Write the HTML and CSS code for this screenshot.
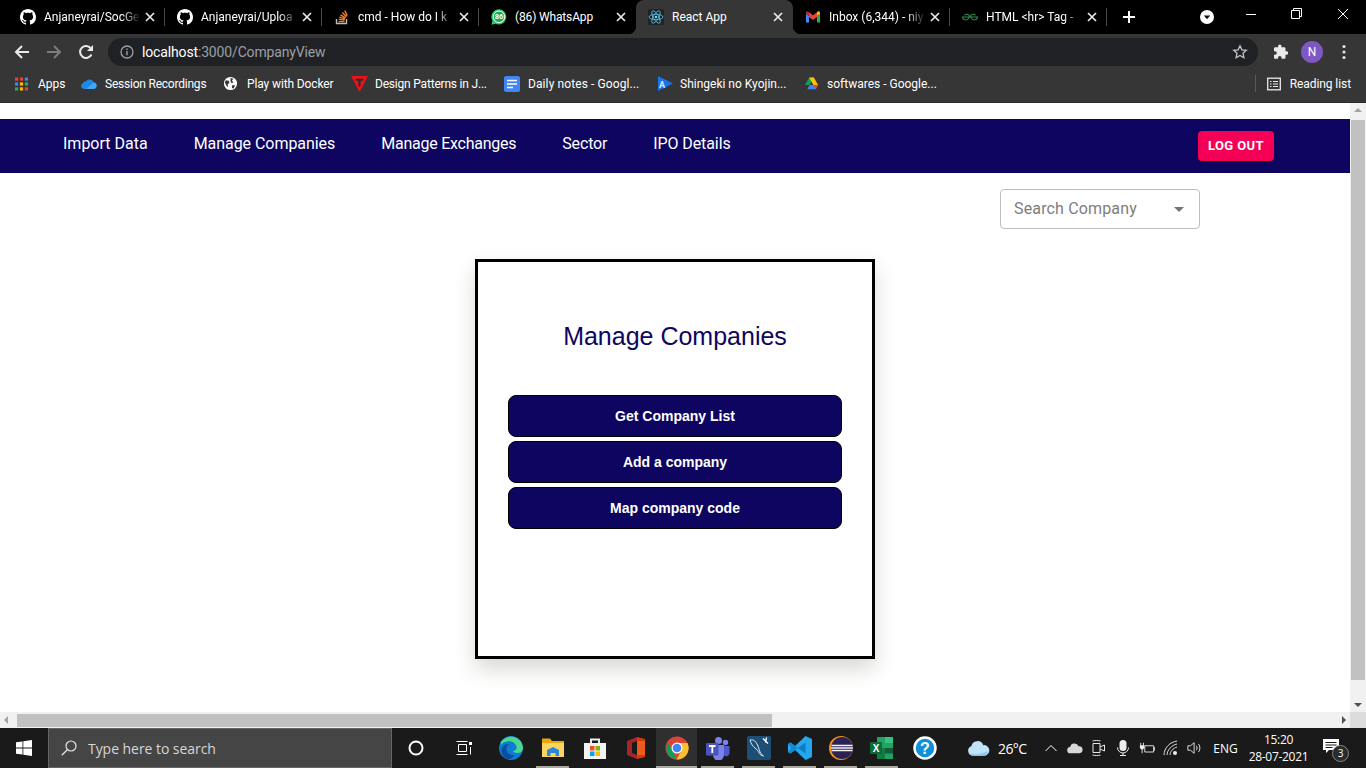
FILE: index.html
```html
<!DOCTYPE html>
<html lang="en">
<head>
    <meta charset="UTF-8">
    <meta name="viewport" content="width=device-width, initial-scale=1.0">
    <title>React App</title>
    <link rel="stylesheet" href="styles.css">
</head>
<body>
    <svg class="defs" width="0" height="0">
        <symbol id="i-github" viewBox="0 0 16 16"><path fill="#fff" d="M8 0C3.58 0 0 3.58 0 8c0 3.54 2.29 6.53 5.47 7.59.4.07.55-.17.55-.38 0-.19-.01-.82-.01-1.49-2.01.37-2.53-.49-2.69-.94-.09-.23-.48-.94-.82-1.13-.28-.15-.68-.52-.01-.53.63-.01 1.08.58 1.23.82.72 1.21 1.87.87 2.33.66.07-.52.28-.87.51-1.07-1.78-.2-3.64-.89-3.64-3.95 0-.87.31-1.59.82-2.15-.08-.2-.36-1.02.08-2.12 0 0 .67-.21 2.2.82.64-.18 1.32-.27 2-.27.68 0 1.36.09 2 .27 1.53-1.04 2.2-.82 2.2-.82.44 1.1.16 1.92.08 2.12.51.56.82 1.27.82 2.15 0 3.07-1.87 3.75-3.65 3.95.29.25.54.73.54 1.48 0 1.07-.01 1.93-.01 2.2 0 .21.15.46.55.38A8.013 8.013 0 0016 8c0-4.42-3.58-8-8-8z"/></symbol>
        <symbol id="i-close" viewBox="0 0 10 10"><path stroke="#e8eaed" stroke-width="1.7" d="M1 1l8 8M9 1l-8 8"/></symbol>
    </svg>

    <div class="tabstrip">
        <div class="tab">
            <svg class="favicon"><use href="#i-github"/></svg>
            <span class="tab-title">Anjaneyrai/SocGe</span>
            <svg class="tab-close"><use href="#i-close"/></svg>
        </div>
        <div class="tab">
            <svg class="favicon"><use href="#i-github"/></svg>
            <span class="tab-title">Anjaneyrai/Uploa</span>
            <svg class="tab-close"><use href="#i-close"/></svg>
        </div>
        <div class="tab">
            <svg class="favicon" viewBox="0 0 16 16"><path fill="none" stroke="#bcbbbb" stroke-width="1.4" d="M2.5 10v4.5h10V10"/><path fill="none" stroke="#f48024" stroke-width="1.4" d="M4.5 12.6h6M4.7 10.4l5.9.6M5.3 8.2l5.7 1.6M6.5 5.9l5.1 3M8.4 3.6l4.1 4.2M10.8 1.6l2.4 5.2"/></svg>
            <span class="tab-title">cmd - How do I k</span>
            <svg class="tab-close"><use href="#i-close"/></svg>
        </div>
        <div class="tab">
            <svg class="favicon" viewBox="0 0 16 16"><path fill="#25d366" d="M8 .2a7.6 7.6 0 0 0-6.500 11.500L.4 15.800l4.100-1.100A7.600 7.600 0 1 0 8 .2z"/><circle cx="8" cy="7.800" r="5.700" fill="#1aa557" stroke="#fff" stroke-width="1"/><text x="8" y="10.300" class="wa-count">86</text></svg>
            <span class="tab-title">(86) WhatsApp</span>
            <svg class="tab-close"><use href="#i-close"/></svg>
        </div>
        <div class="tab active">
            <svg class="favicon" viewBox="0 0 16 16"><rect width="16" height="16" rx="2" fill="#20232a"/><g fill="none" stroke="#61dafb" stroke-width=".7"><ellipse cx="8" cy="8" rx="7" ry="2.7"/><ellipse cx="8" cy="8" rx="7" ry="2.7" transform="rotate(60 8 8)"/><ellipse cx="8" cy="8" rx="7" ry="2.7" transform="rotate(120 8 8)"/></g><circle cx="8" cy="8" r="1.3" fill="#61dafb"/></svg>
            <span class="tab-title">React App</span>
            <svg class="tab-close"><use href="#i-close"/></svg>
        </div>
        <div class="tab">
            <svg class="favicon" viewBox="0 0 16 16"><path fill="#4285f4" d="M1 13.5h3V7L1 4.5z"/><path fill="#34a853" d="M12 13.5h3v-9L12 7z"/><path fill="#ea4335" d="M4 8V3.2L8 6.300l4-3.100V8L8 11z"/><path fill="#c5221f" d="M1 4.700V3.800C1 2.500 2.600 1.900 3.500 2.700L4 3.200V7z"/><path fill="#fbbc04" d="M15 4.700V3.800c0-1.300-1.600-1.900-2.500-1.100l-.5.500V7z"/></svg>
            <span class="tab-title">Inbox (6,344) - niy</span>
            <svg class="tab-close"><use href="#i-close"/></svg>
        </div>
        <div class="tab">
            <svg class="favicon" viewBox="0 0 16 16"><path fill="none" stroke="#2f8d46" stroke-width="1.100" d="M8 8h7.500a3.300 3.300 0 0 1-6 1.500C8.500 8 8 6 10 5.500a3 3 0 0 1 3.500.9M8 8H.5a3.300 3.300 0 0 0 6 1.500C7.500 8 8 6 6 5.500a3 3 0 0 0-3.500.9"/></svg>
            <span class="tab-title">HTML &lt;hr&gt; Tag -</span>
            <svg class="tab-close"><use href="#i-close"/></svg>
        </div>
        <svg class="new-tab" viewBox="0 0 12 12"><path stroke="#fff" stroke-width="2" d="M6 0v12M0 6h12"/></svg>
        <svg class="profile-down" viewBox="0 0 14 14"><circle cx="7" cy="7" r="7" fill="#fff"/><path fill="#111" d="M3.800 5.500h6.400L7 9.300z"/></svg>
        <div class="window-btns">
            <svg viewBox="0 0 46 30"><path stroke="#fff" d="M18 14.500h10"/></svg>
            <svg viewBox="0 0 46 30"><path fill="none" stroke="#fff" d="M19.500 10.500v-2h8v8h-2M17.500 10.500h8v8h-8z"/></svg>
            <svg viewBox="0 0 46 30"><path stroke="#fff" d="M18 9l10 10M28 9L18 19"/></svg>
        </div>
    </div>

    <div class="toolbar">
        <svg class="tool-icon" viewBox="0 0 16 16"><path fill="none" stroke="#e8eaed" stroke-width="2" d="M15 8H2M8 2L2 8l6 6"/></svg>
        <svg class="tool-icon" viewBox="0 0 16 16"><path fill="none" stroke="#7a7c7f" stroke-width="2" d="M1 8h13M8 2l6 6-6 6"/></svg>
        <svg class="tool-icon" viewBox="0 0 16 16"><path fill="none" stroke="#e8eaed" stroke-width="2" d="M13.500 10.500A6 6 0 1 1 13 4.500"/><path fill="#e8eaed" d="M15 1v6H9z"/></svg>
        <div class="omnibox">
            <svg class="info-icon" viewBox="0 0 14 14"><circle cx="7" cy="7" r="6" fill="none" stroke="#9aa0a6" stroke-width="1.300"/><path stroke="#9aa0a6" stroke-width="1.400" d="M7 6v4.200M7 3.500v1.400"/></svg>
            <span class="url"><span class="host">localhost</span>:3000/CompanyView</span>
            <svg class="star-icon" viewBox="0 0 16 16"><path fill="none" stroke="#c4c7c5" stroke-width="1.300" d="M8 1.800l1.900 4 4.400.5-3.300 3 .9 4.400L8 11.500l-3.900 2.200.9-4.400-3.300-3 4.400-.5z"/></svg>
        </div>
        <svg class="puzzle" viewBox="0 0 16 16"><path fill="#e8eaed" d="M14.500 7.300h-1V4.600c0-.8-.6-1.400-1.400-1.400H9.500v-1a1.700 1.700 0 0 0-3.400 0v1H3.400C2.600 3.200 2 3.800 2 4.600v2.600h1a1.800 1.800 0 0 1 0 3.600H2v2.600c0 .8.600 1.400 1.400 1.400H6v-1a1.800 1.800 0 0 1 3.600 0v1h2.500c.8 0 1.400-.6 1.400-1.400v-2.700h1a1.700 1.700 0 0 0 0-3.400z"/></svg>
        <span class="avatar">N</span>
        <svg class="dots" viewBox="0 0 4 16"><circle cx="2" cy="2.500" r="1.500" fill="#e8eaed"/><circle cx="2" cy="8" r="1.500" fill="#e8eaed"/><circle cx="2" cy="13.500" r="1.500" fill="#e8eaed"/></svg>
    </div>

    <div class="bookmarks">
        <div class="bm">
            <svg viewBox="0 0 14 14"><rect width="3.400" height="3.400" fill="#ea4335"/><rect x="5.300" width="3.400" height="3.400" fill="#ea4335"/><rect x="10.600" width="3.400" height="3.400" fill="#4285f4"/><rect y="5.300" width="3.400" height="3.400" fill="#4285f4"/><rect x="5.300" y="5.300" width="3.400" height="3.400" fill="#fbbc04"/><rect x="10.600" y="5.300" width="3.400" height="3.400" fill="#34a853"/><rect y="10.600" width="3.400" height="3.400" fill="#34a853"/><rect x="5.300" y="10.600" width="3.400" height="3.400" fill="#fbbc04"/><rect x="10.600" y="10.600" width="3.400" height="3.400" fill="#ea4335"/></svg>
            <span>Apps</span>
        </div>
        <div class="bm">
            <svg viewBox="0 0 16 11"><path fill="#1e88e5" d="M3 11A3 3 0 0 1 1.800 5.300 3.500 3.500 0 0 1 5 3.300 4.300 4.300 0 0 1 12.700 4.500 3.300 3.300 0 0 1 13 11z"/><path fill="#42a5f5" d="M5 11l7.500-6.500A3.300 3.300 0 0 1 13 11z"/></svg>
            <span>Session Recordings</span>
        </div>
        <div class="bm">
            <svg viewBox="0 0 16 16"><circle cx="8" cy="8" r="7" fill="#fff"/><path fill="#363636" d="M3 4.500l3 .5 1 2-2 2 .5 3L3.500 10 2 7zM8 2l3 1-1.500 2L11 6.500 9.500 8 8 5.500zM10 9.500l3 .5-2 3.500-1.500-1z"/></svg>
            <span>Play with Docker</span>
        </div>
        <div class="bm">
            <svg viewBox="0 0 16 16"><path fill="#ee1119" d="M0 1h16L8 16z"/><path fill="#2b2b2b" d="M4.500 3.500h7v1.800H9v4.500L8 11.500 7 9.800V5.300H4.500z"/></svg>
            <span>Design Patterns in J...</span>
        </div>
        <div class="bm">
            <svg viewBox="0 0 16 16"><rect width="16" height="16" rx="2" fill="#4285f4"/><path stroke="#fff" stroke-width="1.600" d="M3 4.500h10M3 8h10M3 11.500h6"/></svg>
            <span>Daily notes - Googl...</span>
        </div>
        <div class="bm">
            <svg viewBox="0 0 15 15"><path fill="#1a73e8" d="M0 0l15 7.500L0 15z"/><text x="1" y="11.500" class="prime-a">A</text></svg>
            <span>Shingeki no Kyojin...</span>
        </div>
        <div class="bm">
            <svg viewBox="0 0 16 16"><path fill="#0f9d58" d="M5.500 1.500h5L6 9.700H1z"/><path fill="#ffc107" d="M10.500 1.500L15 9.700h-5L5.500 1.500z"/><path fill="#4285f4" d="M15 9.700l-2.500 4.500h-9L6 9.700z"/><path fill="#ea4335" d="M15 9.700l-2.500 4.500-2.500-4.500z"/></svg>
            <span>softwares - Google...</span>
        </div>
        <div class="reading">
            <svg viewBox="0 0 14 14"><rect x=".7" y="1.200" width="12.600" height="11.600" fill="none" stroke="#e8eaed" stroke-width="1.300"/><path stroke="#e8eaed" stroke-width="1.200" d="M3 4.500h1.500M6 4.500h5M3 7h1.500M6 7h5M3 9.500h1.500M6 9.500h5"/></svg>
            <span>Reading list</span>
        </div>
    </div>

    <div class="viewport">
        <div class="page-col">
            <div class="page">
                <nav class="navbar">
                    <a class="nav-link">Import Data</a>
                    <a class="nav-link">Manage Companies</a>
                    <a class="nav-link">Manage Exchanges</a>
                    <a class="nav-link">Sector</a>
                    <a class="nav-link">IPO Details</a>
                    <button class="logout">LOG OUT</button>
                </nav>
                <div class="search-row">
                    <div class="search-select">
                        <span>Search Company</span>
                        <i class="caret"></i>
                    </div>
                </div>
                <div class="card">
                    <h2>Manage Companies</h2>
                    <div class="card-actions">
                        <button class="action-btn">Get Company List</button>
                        <button class="action-btn">Add a company</button>
                        <button class="action-btn">Map company code</button>
                    </div>
                </div>
            </div>
            <div class="hscroll">
                <i class="arrow-left"></i>
                <div class="hthumb"></div>
                <i class="arrow-right"></i>
            </div>
        </div>
        <div class="vscroll">
            <i class="arrow-up"></i>
            <div class="vthumb"></div>
            <i class="arrow-down"></i>
            <div class="corner"></div>
        </div>
    </div>

    <div class="taskbar">
        <div class="start">
            <svg viewBox="0 0 16 16"><path fill="#fff" d="M0 2.300l6.500-.9v6.200H0zM7.300 1.300L16 0v7.600H7.300zM0 8.400h6.500v6.200L0 13.700zM7.300 8.400H16V16l-8.700-1.300z"/></svg>
        </div>
        <div class="task-search">
            <svg viewBox="0 0 16 16"><circle cx="10" cy="6" r="5" fill="none" stroke="#e6e6e6" stroke-width="1.200"/><path stroke="#e6e6e6" stroke-width="1.300" d="M6.300 9.700L.8 15.200"/></svg>
            <span>Type here to search</span>
        </div>
        <div class="task-btn"><svg class="cortana" viewBox="0 0 16 16"><circle cx="8" cy="8" r="6.500" fill="none" stroke="#fff" stroke-width="2"/></svg></div>
        <div class="task-btn"><svg class="taskview" viewBox="0 0 16 16"><path fill="none" stroke="#fff" d="M.5 1.500h11M2.500 4.500h8v7h-8zM.5 14.500h11M14.500 7v7.500"/><rect x="13" y="2" width="3" height="3" fill="#fff"/></svg></div>
        <div class="pinned">
            <div class="app">
                <svg viewBox="0 0 24 24"><circle cx="12" cy="12" r="12" fill="#0c7cd5"/><path fill="#4bd88a" d="M2 6a12 12 0 0 1 22 6c0 3-2.500 5-5.500 5-2.500 0-4-1-4.500-2 3-.5 4-2.500 3.500-4.500C16.500 7 13 5 9.500 5.300 6 5.600 3.500 7 2 9z"/><path fill="#0a4f9e" d="M9 23c-4-1-7-5-6.500-9.500C3 9.500 7 7.500 10.500 8c-2.500 1-3.500 3.500-3 6 .5 3 3.500 5.500 8 5-1.500 2.500-4 4.500-6.500 4z"/></svg>
            </div>
            <div class="app open">
                <svg viewBox="0 0 24 24"><path fill="#e8a80c" d="M1 2.500h8l2 2.500h12v16H1z"/><path fill="#fcd462" d="M1 7h22v14H1z"/><path fill="#2b88d8" d="M6 20v-6l6-3 6 3v6h-3.500v-3h-5v3z"/></svg>
            </div>
            <div class="app">
                <svg viewBox="0 0 24 24"><path fill="none" stroke="#eee" stroke-width="2" d="M8 7V3.500h8V7"/><path fill="#f3f3f3" d="M1 7h22v16H1z"/><rect x="7" y="10" width="4.500" height="4.500" fill="#f25022"/><rect x="12.500" y="10" width="4.500" height="4.500" fill="#7fba00"/><rect x="7" y="15.500" width="4.500" height="4.500" fill="#00a4ef"/><rect x="12.500" y="15.500" width="4.500" height="4.500" fill="#ffb900"/></svg>
            </div>
            <div class="app">
                <svg viewBox="0 0 24 24"><path fill="#d83b01" d="M13 1l8 2v18l-8 2z"/><path fill="#a4262c" d="M3 5l10-4v4L8 7v10l5 2v4L3 19z"/><path fill="#eb5a1e" d="M13 5h8v14h-8z"/></svg>
            </div>
            <div class="app running">
                <svg viewBox="0 0 24 24"><circle cx="12" cy="12" r="11.500" fill="#db4437"/><path fill="#0f9d58" d="M2.800 6.500L7.500 14.500 11.500 23.500A11.500 11.500 0 0 1 2.800 6.500z"/><path fill="#fbc02d" d="M12 7h10.500a11.500 11.500 0 0 1-11 16.500l5-9z"/><circle cx="12" cy="12" r="5.500" fill="#fff"/><circle cx="12" cy="12" r="4.300" fill="#4285f4"/></svg>
            </div>
            <div class="app open">
                <svg viewBox="0 0 24 24"><circle cx="19.500" cy="6.500" r="2.700" fill="#7b83eb"/><circle cx="12.500" cy="4.500" r="3.500" fill="#7b83eb"/><path fill="#5059c9" d="M16 10h7.500v7a3.500 3.500 0 0 1-5 3z"/><path fill="#7b83eb" d="M7 9h11v10a5.500 5.500 0 0 1-11 0z"/><rect y="7" width="12.500" height="12.500" rx="1" fill="#4b53bc"/><path stroke="#fff" stroke-width="1.800" d="M3 10h6.500M6.300 10v7"/></svg>
            </div>
            <div class="app open">
                <svg viewBox="0 0 24 24"><rect width="24" height="24" rx="2" fill="#1d4f76"/><path fill="none" stroke="#dfe9ef" stroke-width="1" d="M3 4c4-1 6 2 7.500 5s2 6 3 8c.5 1 2 2 3 3-2-.5-3-1-4-2.500C11 15 10 13 8 12 6 10.500 4 8 3 4z"/><path stroke="#fff" stroke-width="1.300" d="M16 2.500l5 5M19.500 1.500l-1 5"/></svg>
            </div>
            <div class="app open">
                <svg viewBox="0 0 24 24"><path fill="#22a7f0" d="M17.500 0L24 3v18l-6.500 3L7 14l-4.500 3.500L0 16v-8l2.500-1.500L7 10z"/><path fill="#0e7cc0" d="M17.500 6.500L10 12l7.500 5.500z"/><path fill="#1488d0" d="M0 8l2.500-1.500L10 12l-7.500 5.500L0 16l3.500-4z"/></svg>
            </div>
            <div class="app open">
                <svg viewBox="0 0 24 24"><circle cx="12" cy="12" r="12" fill="#f7941e"/><circle cx="13" cy="12" r="11" fill="#2c2255"/><path stroke="#f3f3f6" stroke-width="1.300" d="M2.500 9.500h21M2 12h22M2.500 14.500h21"/></svg>
            </div>
            <div class="app open">
                <svg viewBox="0 0 24 24"><path fill="#21a366" d="M7 1h16v22H7z"/><path fill="#107c41" d="M7 12h8v11H7z"/><path fill="#33c481" d="M15 1h8v6h-8z"/><path fill="#185c37" d="M15 12h8v5.500h-8z"/><rect y="6" width="12" height="12" rx="1" fill="#0e6a39"/><text x="6" y="15.500" class="xl-x">X</text></svg>
            </div>
            <div class="app help">
                <svg viewBox="0 0 24 24"><circle cx="12" cy="12" r="10.500" fill="#0f90d8" stroke="#fff" stroke-width="2.500"/><text x="12" y="18" class="help-q">?</text></svg>
            </div>
        </div>
        <div class="tray">
            <div class="tray-cell weather">
                <svg viewBox="0 0 24 16"><path fill="#bfe3f7" d="M6 16a5 5 0 0 1-1.500-9.700A6.500 6.500 0 0 1 17 5a5.500 5.500 0 0 1 1.500 11z"/><path fill="#8cc8ef" d="M3 14c5 1 12 .5 19-3-1 3-2 5-4.500 5H6c-1 0-2-1-3-2z"/></svg>
            </div>
            <span class="temp">26°C</span>
            <div class="tray-cell chevron"><svg viewBox="0 0 12 8"><path fill="none" stroke="#fff" d="M.5 7L6 1.500 11.500 7"/></svg></div>
            <div class="tray-cell"><svg viewBox="0 0 18 12"><path fill="#d8d8d8" d="M4 12a3.500 3.500 0 0 1-.5-7A5 5 0 0 1 13 4a4 4 0 0 1 1 8z"/></svg></div>
            <div class="tray-cell"><svg viewBox="0 0 16 16"><path fill="none" stroke="#e6e6e6" d="M2 3.500h7v9H2zM9 7l4.500-2v6L9 9M1.500 1c3-.7 5-.7 8 0M1.500 15c3 .7 5 .7 8 0"/></svg></div>
            <div class="tray-cell"><svg viewBox="0 0 16 16"><rect x="4.500" y="0" width="7" height="11" rx="3.500" fill="#eee"/><path fill="none" stroke="#eee" d="M2.500 7.500a5.500 5.500 0 0 0 11 0M8 13v3M5 15.500h6"/></svg></div>
            <div class="tray-cell"><svg viewBox="0 0 18 14"><path fill="none" stroke="#eee" d="M6.500 4.500h10v7h-10zM16.500 6.500h1v3h-1"/><path fill="#eee" d="M1 4h5v3L4 9H3L1 7zM1.500 1h1v3h-1zM4.500 1h1v3h-1zM3 9h1v4H3z"/></svg></div>
            <div class="tray-cell"><svg viewBox="0 0 16 16"><path fill="none" stroke="#ddd" d="M1 15C1 8 7 2 14 1M4 15c0-5 5-10 10-11M7 15c0-3 3-7 7-8"/><circle cx="12" cy="13" r="2" fill="#eee"/></svg></div>
            <div class="tray-cell"><svg viewBox="0 0 18 14"><path fill="none" stroke="#eee" d="M1 4.500h3L8 1v12L4 9.500H1zM10.500 4.500c1 1.500 1 3.500 0 5M13 2.500c2 2.500 2 6.500 0 9"/></svg></div>
            <span class="lang">ENG</span>
            <div class="clock"><span>15:20</span><span>28-07-2021</span></div>
            <div class="tray-cell notif">
                <svg viewBox="0 0 16 14"><path fill="#fff" d="M0 0h16v11H6l-3 3v-3H0z"/><path stroke="#1a1a1a" d="M2.500 3.500h11M2.500 6h11M2.500 8.500h7"/></svg>
                <span class="notif-count">3</span>
            </div>
        </div>
    </div>
</body>
</html>
```

FILE: styles.css
```css
* { box-sizing: border-box; }

html, body {
    margin: 0;
    height: 100%;
    overflow: hidden;
}

body {
    width: 1366px;
    height: 768px;
    display: flex;
    flex-direction: column;
    font-family: Roboto, sans-serif;
    background: #fff;
}

svg { display: block; flex: none; }
.defs { position: absolute; }

/* browser chrome */
.tabstrip {
    height: 34px;
    flex: none;
    display: flex;
    align-items: center;
    padding-left: 8px;
    background: #000;
    color: #fff;
    font-size: 12px;
}

.tab {
    position: relative;
    width: 157px;
    height: 34px;
    flex: none;
    display: flex;
    align-items: center;
    padding: 0 10px 0 12px;
}

.tab::after {
    content: "";
    position: absolute;
    right: 0;
    top: 8px;
    height: 18px;
    width: 1px;
    background: #4a4a4a;
}

.tab:nth-child(4)::after { display: none; }

.tab.active {
    background: #363636;
    border-radius: 8px 8px 0 0;
}

/* the curved feet of the selected tab */
.tab.active::before,
.tab.active::after {
    content: "";
    position: absolute;
    top: auto;
    bottom: 0;
    width: 8px;
    height: 8px;
}

.tab.active::before {
    left: -8px;
    background: radial-gradient(circle at 0 0, transparent 8px, #363636 8.5px);
}

.tab.active::after {
    right: -8px;
    background: radial-gradient(circle at 100% 0, transparent 8px, #363636 8.5px);
}

.favicon { width: 16px; height: 16px; }

.wa-count {
    font: bold 7.5px Roboto, sans-serif;
    fill: #fff;
    text-anchor: middle;
}

.tab-title {
    flex: 1;
    margin: 0 4px 0 8px;
    white-space: nowrap;
    -webkit-mask-image: linear-gradient(to right, #000 80%, transparent 100%);
    mask-image: linear-gradient(to right, #000 80%, transparent 100%);
}

.tab:nth-child(4) .tab-title,
.tab.active .tab-title {
    -webkit-mask-image: none;
    mask-image: none;
}

.tab:nth-child(4) .tab-title { letter-spacing: -0.15px; }

.tab-close { width: 10px; height: 10px; }

.new-tab { width: 12px; height: 12px; margin-left: 16px; }

.profile-down { width: 14px; height: 14px; margin-left: 65px; }

.window-btns {
    display: flex;
    margin-left: auto;
    align-self: flex-start;
}

.window-btns svg { width: 46px; height: 30px; }

.toolbar {
    height: 36px;
    flex: none;
    display: flex;
    align-items: center;
    padding: 0 14px;
    background: #363636;
}

.tool-icon { width: 16px; height: 16px; margin-right: 16px; }

.omnibox {
    width: 1150px;
    height: 28px;
    margin-left: -2px;
    flex: none;
    display: flex;
    align-items: center;
    padding: 0 10px 0 12px;
    border-radius: 14px;
    background: #202124;
    font-size: 14px;
    letter-spacing: -0.15px;
    color: #9aa0a6;
}

.info-icon { width: 14px; height: 14px; }
.url { margin-left: 8px; flex: 1; }
.host { color: #fff; }
.star-icon { width: 16px; height: 16px; }

.puzzle { width: 16px; height: 16px; margin-left: 14px; }

.avatar {
    width: 22px;
    height: 22px;
    margin-left: 13px;
    flex: none;
    border-radius: 50%;
    background: #7e57c2;
    color: #fff;
    font-size: 12px;
    line-height: 22px;
    text-align: center;
}

.dots { width: 4px; height: 16px; margin-left: 19px; }

.bookmarks {
    height: 33px;
    flex: none;
    display: flex;
    align-items: center;
    padding: 0 15px 5px;
    background: #363636;
    border-bottom: 1px solid #2a2a2a;
    color: #fff;
    font-size: 12px;
}

.bm {
    display: flex;
    align-items: center;
    flex: none;
    white-space: nowrap;
}

.bm svg { width: 15px; height: 15px; margin-right: 8px; }

.bm:nth-child(1) { width: 66px; }
.bm:nth-child(2) { width: 143px; }
.bm:nth-child(3) { width: 127px; }
.bm:nth-child(4) { width: 153px; }
.bm:nth-child(5) { width: 154px; }
.bm:nth-child(6) { width: 146px; }

.bm:nth-child(1) svg { width: 13px; height: 14px; margin-right: 10px; }
.bm:nth-child(2) svg { width: 16px; height: 11px; }
.bm:nth-child(3) svg { margin-left: -1px; margin-right: 9px; }
.bm:nth-child(4) svg { width: 17px; height: 17px; margin-right: 7px; }
.bm:nth-child(5) svg { width: 16px; height: 16px; }
.bm:nth-child(6) svg { width: 15px; margin-right: 7px; }

.bm:nth-child(2) span { letter-spacing: -0.22px; }
.bm:nth-child(3) span { letter-spacing: -0.12px; }
.bm:nth-child(4) span { letter-spacing: -0.2px; }
.bm:nth-child(5) span { letter-spacing: 0.1px; }

.prime-a { font: bold 9px Roboto, sans-serif; fill: #d8e8ff; }

.reading {
    display: flex;
    align-items: center;
    margin-left: auto;
    padding-left: 11px;
    border-left: 1px solid #5a5a5a;
    height: 17px;
    white-space: nowrap;
    letter-spacing: -0.08px;
}

.reading svg { width: 14px; height: 14px; margin-right: 9px; }

/* page */
.viewport {
    flex: 1;
    min-height: 0;
    display: flex;
}

.page-col {
    width: 1350px;
    display: flex;
    flex-direction: column;
}

.page {
    flex: 1;
    min-height: 0;
    padding-top: 16px;
    overflow: hidden;
    background: #fff;
}

.navbar {
    height: 54px;
    display: flex;
    align-items: center;
    gap: 46px;
    padding: 0 76px 0 63px;
    background: #0d0560;
}

.nav-link {
    color: #fff;
    font-size: 16px;
    line-height: 24px;
    margin-top: -4px;
}

.nav-link:nth-child(2) { letter-spacing: -0.05px; }
.nav-link:nth-child(3) { letter-spacing: -0.25px; }
.nav-link:nth-child(4) { letter-spacing: -0.15px; }
.nav-link:nth-child(5) { letter-spacing: -0.1px; }

.logout {
    width: 76px;
    height: 30px;
    margin: 0 0 0 auto;
    padding: 0 0 2px;
    border: none;
    border-radius: 4px;
    background: #f50057;
    color: #fff;
    font-family: Roboto, sans-serif;
    font-size: 13px;
    font-weight: 700;
    letter-spacing: 0.4px;
    box-shadow: 0 1px 3px rgba(0, 0, 0, 0.3);
}

.search-row {
    display: flex;
    justify-content: flex-end;
    padding: 16px 150px 0 0;
}

.search-select {
    width: 200px;
    height: 40px;
    display: flex;
    align-items: center;
    justify-content: space-between;
    padding: 0 15px 2px 13px;
    border: 1px solid #bdbdbd;
    border-radius: 4px;
    color: #7d7d7d;
    font-size: 16px;
    letter-spacing: 0.15px;
}

.caret {
    width: 0;
    height: 0;
    margin-top: 2px;
    border-left: 5px solid transparent;
    border-right: 5px solid transparent;
    border-top: 5px solid #757575;
}

.card {
    width: 400px;
    height: 400px;
    margin: 30px auto 0;
    padding: 60px 30px 0;
    border: 3px solid #000;
    background: #fff;
    box-shadow: 0 10px 20px rgba(60, 60, 40, 0.2);
    font-family: "Liberation Sans", Arial, sans-serif;
}

.card h2 {
    margin: 0;
    height: 28px;
    color: #0d0560;
    font-size: 25px;
    font-weight: 400;
    line-height: 28px;
    text-align: center;
}

.card-actions {
    display: flex;
    flex-direction: column;
    gap: 4px;
    margin-top: 45px;
}

.action-btn {
    height: 42px;
    border: 1px solid #000;
    border-radius: 8px;
    background: #0d0560;
    color: #fff;
    font-family: "Liberation Sans", Arial, sans-serif;
    font-size: 14px;
    font-weight: 700;
}

.hscroll {
    height: 16px;
    flex: none;
    display: flex;
    align-items: center;
    background: #f1f1f1;
    padding: 0 4px;
}

.hthumb {
    width: 755px;
    height: 13px;
    margin-left: 9px;
    background: #c1c1c1;
}

.arrow-left,
.arrow-right,
.arrow-up,
.arrow-down {
    width: 0;
    height: 0;
    flex: none;
    border: 4px solid transparent;
}

.arrow-left { border-right-color: #a3a3a3; border-left-width: 0; }
.arrow-right { border-left-color: #505050; border-right-width: 0; margin-left: auto; margin-right: 0; }

.vscroll {
    width: 16px;
    display: flex;
    flex-direction: column;
    align-items: center;
    background: #f1f1f1;
}

.arrow-up { border-bottom-color: #a3a3a3; border-top-width: 0; margin-top: 5px; }

.vthumb {
    width: 14px;
    height: 560px;
    margin-top: 8px;
    background: #c1c1c1;
}

.arrow-down { border-top-color: #505050; border-bottom-width: 0; margin-top: auto; margin-bottom: 5px; }

.corner {
    width: 16px;
    height: 16px;
    flex: none;
    background: #dcdcdc;
}

/* windows taskbar */
.taskbar {
    height: 40px;
    flex: none;
    display: flex;
    align-items: stretch;
    background: #1a1a1a;
    color: #fff;
    font-family: "Open Sans", sans-serif;
    font-size: 12px;
}

.start {
    width: 48px;
    display: flex;
    align-items: center;
    justify-content: center;
}

.start svg { width: 16px; height: 16px; }

.task-search {
    width: 344px;
    display: flex;
    align-items: center;
    padding-left: 12px;
    background: #454545;
    border: 1px solid #666;
    color: #d6d6d6;
    font-size: 14px;
    letter-spacing: -0.05px;
}

.task-search svg { width: 16px; height: 16px; margin-right: 11px; }

.task-btn {
    width: 48px;
    display: flex;
    align-items: center;
    justify-content: center;
}

.cortana { width: 16px; height: 16px; }
.taskview { width: 16px; height: 16px; }

.pinned {
    display: flex;
    margin-left: 2px;
}

.app {
    position: relative;
    width: 41px;
    display: flex;
    align-items: center;
    justify-content: center;
}

.app:nth-child(2),
.app:nth-child(3) { margin-left: 1px; }

.app svg { width: 24px; height: 24px; }

.app.open::after,
.app.running::after {
    content: "";
    position: absolute;
    left: 4px;
    right: 4px;
    bottom: 0;
    height: 2px;
    background: #a9a9a0;
}

.app.running { background: #2f2f2f; }
.app.running::after { left: 0; right: 0; }

.app.help { width: 45px; }

.xl-x { font: bold 10px "Liberation Sans", sans-serif; fill: #fff; text-anchor: middle; }
.help-q { font: bold 16px "Liberation Sans", sans-serif; fill: #fff; text-anchor: middle; }

.tray {
    margin-left: auto;
    display: flex;
    align-items: center;
    padding-right: 12px;
}

.tray-cell {
    position: relative;
    width: 24px;
    height: 40px;
    display: flex;
    align-items: center;
    justify-content: center;
}

.tray-cell svg { width: 16px; height: 16px; }

.weather { width: 36px; margin-right: 2px; }
.weather svg { width: 23px; height: 16px; }

.temp { width: 34px; font-size: 14px; letter-spacing: -0.6px; }

.chevron { margin-left: 7px; }
.chevron svg { width: 12px; height: 8px; }

.lang { width: 37px; text-align: center; font-size: 12px; }

.clock {
    width: 69px;
    display: flex;
    flex-direction: column;
    align-items: center;
    line-height: 17px;
    font-size: 12px;
    letter-spacing: -0.3px;
}

.notif { width: 41px; }
.notif svg { width: 16px; height: 14px; margin: -4px 6px 0 0; }

.notif-count {
    position: absolute;
    right: 5px;
    bottom: 6px;
    width: 17px;
    height: 17px;
    border: 1px solid #888;
    border-radius: 50%;
    background: #2b2b2b;
    font-size: 10px;
    line-height: 15px;
    text-align: center;
}
```
